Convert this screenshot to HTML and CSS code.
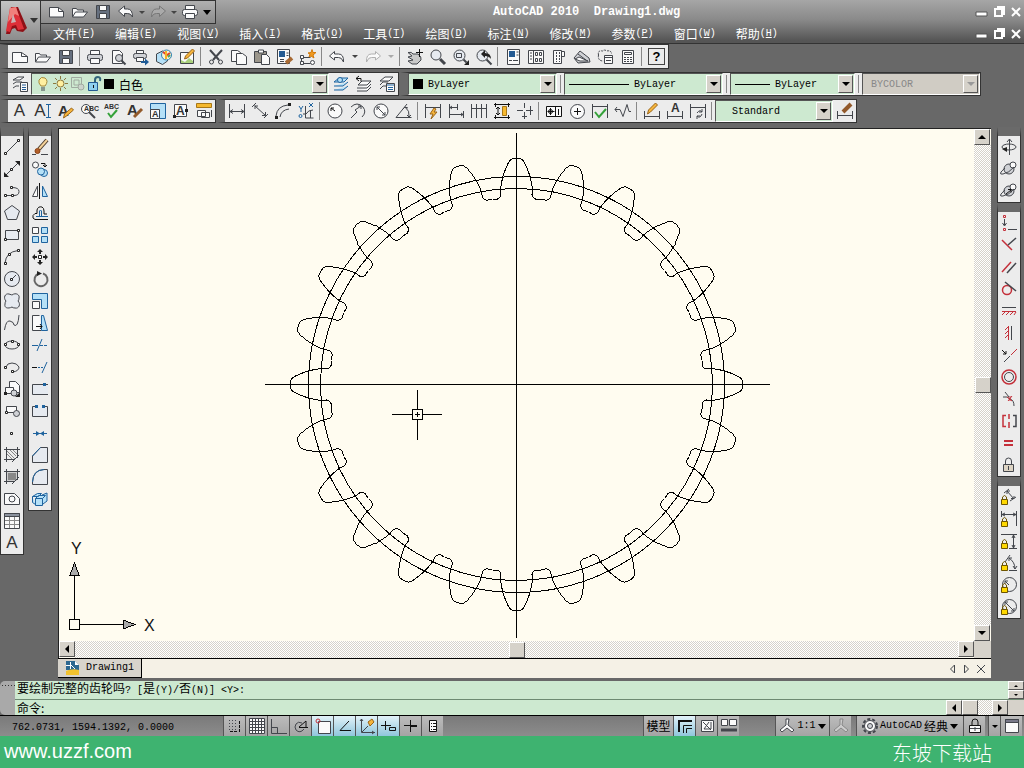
FILE: index.html
```html
<!DOCTYPE html>
<html lang="zh-CN">
<head>
<meta charset="utf-8">
<title>AutoCAD 2010 Drawing1.dwg</title>
<link rel="stylesheet" href="styles.css">
</head>
<body>
<header class="titlebar">
  <button class="app-button" title="应用程序菜单">
    <svg class="logo"><path fill="#8f1016" d="M2 29L7 2l7 0 9 21-4 4-6-1-2-3-3 1-2 5z"/><path fill="#dd2f38" d="M2 26L6 3l6-1 8 22-6 1-2-5-4 1-2 6z"/><path fill="#f0807c" d="M6 3l6-1 3 9-4-2-7 8z"/><path fill="#c9b4b4" d="M9 9l3 8-5 1z"/></svg>
    <i class="caret"></i>
  </button>
  <div class="title-main">
    <div class="title-row">
      <div class="quick">
        <button title="新建"><svg><path class="w" d="M.5 3.500h9l5 4v5.500h-14z"/><path d="M9.500 3.500v4h5"/></svg></button>
        <button title="打开"><svg><path class="w" d="M.5 13V4.500h4l1 1.500h6v2"/><path class="w" d="M.5 13l3-5h12l-4 5z"/></svg></button>
        <button title="保存"><svg><path fill="#66707f" d="M1.500 1.500h13v13h-13z"/><path class="w" d="M4.500 1.500h7v5h-7zM4.500 9.500h7v5h-7z"/></svg></button>
        <button title="放弃"><svg><path class="w" d="M.5 7l6-5v3h3q5 0 5 8-2-4-5-3.500h-3v3z"/></svg></button>
        <button class="drop" title="放弃列表"><i class="caret small"></i></button>
        <button title="重做"><svg><path fill="#aaa" stroke="#777" d="M15.500 7l-6-5v3h-3q-5 0-5 8 2-4 5-3.500h3v3z"/></svg></button>
        <button class="drop" title="重做列表"><i class="caret small"></i></button>
        <button title="打印"><svg><path class="w" d="M3.500 5.500v-4h9v4"/><rect class="w" x=".5" y="5.500" width="15" height="6" rx="2"/><path class="w" d="M3.500 9.500h9v5h-9z"/></svg></button>
        <button class="drop" title="自定义"><i class="caret black"></i></button>
      </div>
      <h1>AutoCAD 2010  Drawing1.dwg</h1>
      <div class="window-controls">
        <button title="最小化"><svg><path class="ctl" d="M1 8h11v4H1z"/></svg></button>
        <button title="还原"><svg><path class="ctl-line" d="M5 3h7v8M3 5h7v7H3z"/></svg></button>
        <button title="关闭"><svg><path class="ctl-line" d="M3 4l8 8M11 4l-8 8"/></svg></button>
      </div>
    </div>
    <div class="menu-row">
      <nav class="menus">
        <button>文件<span class="m">(<u>F</u>)</span></button>
        <button>编辑<span class="m">(<u>E</u>)</span></button>
        <button>视图<span class="m">(<u>V</u>)</span></button>
        <button>插入<span class="m">(<u>I</u>)</span></button>
        <button>格式<span class="m">(<u>O</u>)</span></button>
        <button>工具<span class="m">(<u>T</u>)</span></button>
        <button>绘图<span class="m">(<u>D</u>)</span></button>
        <button>标注<span class="m">(<u>N</u>)</span></button>
        <button>修改<span class="m">(<u>M</u>)</span></button>
        <button>参数<span class="m">(<u>P</u>)</span></button>
        <button>窗口<span class="m">(<u>W</u>)</span></button>
        <button>帮助<span class="m">(<u>H</u>)</span></button>
      </nav>
      <div class="window-controls">
        <button title="最小化图形"><svg><path class="ctl" d="M1 8h11v4H1z"/></svg></button>
        <button title="还原图形"><svg><path class="ctl-line" d="M5 3h7v8M3 5h7v7H3z"/></svg></button>
        <button title="关闭图形"><svg><path class="ctl-line" d="M3 4l8 8M11 4l-8 8"/></svg></button>
      </div>
    </div>
  </div>
</header>

<section class="toolbars">
  <div class="tool-row">
    <div class="toolbar">
      <button title="新建"><svg><path class="w" d="M.5 3.500h9l6 4v6h-15z"/><path d="M9.500 3.500v4h6"/></svg></button>
      <button title="打开"><svg><path class="w" d="M.5 13V4.500h4l1 1.500h6v2"/><path class="w" d="M.5 13l3-5h12l-4 5z"/></svg></button>
      <button title="保存"><svg><path fill="#66707f" d="M1.500 1.500h13v13h-13z"/><path class="w" d="M4.500 1.500h7v5h-7zM4.500 9.500h7v5h-7z"/></svg></button>
      <hr>
      <button title="打印"><svg><path class="w" d="M3.500 5.500v-4h9v4"/><rect class="g" x=".5" y="5.500" width="15" height="6" rx="2"/><path class="w" d="M3.500 9.500h9v5h-9z"/></svg></button>
      <button title="打印预览"><svg><path class="w" d="M2.500 14.500v-13h7l3 3v10z"/><circle class="g" cx="9" cy="9" r="3.500"/><path stroke-width="2" d="M11.500 11.500l4 4"/></svg></button>
      <button title="发布"><svg><path class="w" d="M3.500 5.500v-4h7v4"/><rect class="g" x=".5" y="4.500" width="13" height="5" rx="2"/><path class="w" d="M3.500 8.500h7v4h-7z"/><path stroke="#1d5a96" stroke-width="2" d="M8 13h5"/><path fill="#1d5a96" stroke="none" d="M12 9.500l4 3.500-4 3.500z"/></svg></button>
      <button title="三维DWF"><svg><path class="lb" d="M.5 5l6-3 5 3v7l-5 3.500-6-3z"/><circle fill="#f4f1d8" stroke="#2d82b0" cx="10.500" cy="6" r="5"/><path stroke="#e2402c" stroke-width="2" d="M7 3l4 3 3-2"/><path stroke="#f4b222" stroke-width="2" d="M10 2v8"/><path stroke="#4aa55a" stroke-width="2" d="M12 8l2-2"/></svg></button>
      <button title="标记"><svg><path class="w" d="M1.500 3.500h13v11h-13z"/><path fill="#a9cf7c" stroke="none" d="M2 14v-3l4 2 4-4 4 3v2z"/><path class="o" d="M5.500 10l1-3 7-7 2 2-7 7z"/></svg></button>
      <hr>
      <button title="剪切"><svg><path stroke-width="2" d="M2 1l9 10M14 1L5 11"/><circle cx="3.500" cy="13" r="2"/><circle cx="12.500" cy="13" r="2"/></svg></button>
      <button title="复制"><svg><path class="w" d="M.5 1.500h6l3 2v9h-9z"/><path class="w" d="M5.500 4.500h6l4 3v8h-10z"/></svg></button>
      <button title="粘贴"><svg><path fill="#9b968b" d="M.5 2.500h12v11H.5z"/><path class="w" d="M4.500 1h5v3h-5zM7.500 5.500h5l3 3v7h-8z"/></svg></button>
      <button title="特性匹配"><svg><path class="w" d="M.5.500h12v14H.5z"/><path fill="#245b93" stroke="none" d="M2 2h6v6H2z"/><path d="M9.500 4h2M9.500 6.500h2M3 10.500h4M3 12.500h4"/><path stroke="#a86a34" stroke-width="4" d="M15 9l-6 5"/></svg></button>
      <button title="块编辑器"><svg><path d="M1.500 14.500v-6h9M3.500 14.500h7"/><path class="w" d="M.5 12.500h3v3h-3zM.5 6.500h3v3h-3z"/><circle class="w" cx="12.500" cy="13.500" r="2"/><path fill="#f09a20" stroke="#d27a0c" d="M12 .5l1 3 3 0-3 2.500 1 3-3-2-2 1 1-3-2-1 3-.5z"/></svg></button>
      <hr>
      <button title="放弃"><svg><path class="w" d="M.5 7l5-4.500V5h4q5.500 0 5 8-2-5-5-4.500h-4V11z"/></svg></button>
      <button class="drop" title="放弃列表"><i class="caret small"></i></button>
      <button title="重做"><svg><path class="w dim" d="M15.500 7l-5-4.500V5h-4q-5.500 0-5 8 2-5 5-4.500h4V11z"/></svg></button>
      <button class="drop" title="重做列表"><i class="caret small pale"></i></button>
      <hr>
      <button title="实时平移"><svg><path fill="#c9c9c9" d="M1 3.500q4-1 5 1.500l5 0q4 3 3 6l-4 4H5L1 12l5-1-5-3 4-1z"/><path class="k" d="M12.500 0v8M9 3.500h7"/></svg></button>
      <button title="实时缩放"><svg><circle class="lg" cx="6" cy="6" r="5"/><path stroke-width="3" d="M10 10l5 5"/></svg></button>
      <button title="窗口缩放"><svg><circle class="lg" cx="6.500" cy="6.500" r="5.500"/><path d="M3.500 4.500h5v4h-5z"/><path stroke-width="2" d="M10.500 10.500l3 3"/><path class="f" d="M16 11v5h-5z"/></svg></button>
      <button title="缩放上一个"><svg><circle class="lg" cx="6.500" cy="6.500" r="5.500"/><path stroke-width="2" d="M10.500 10.500l5 5"/><path class="f" d="M5 5l4-4v3q6 0 6 6-2-3-6-3v2z"/></svg></button>
      <hr>
      <button title="特性"><svg><path class="w" d="M2.500.500h12v15h-12z"/><path fill="#245b93" stroke="none" d="M4 2h6v6H4z"/><path d="M11.500 3h2M11.500 6h2M4 11.500h3M8 11.500h5"/></svg></button>
      <button title="设计中心"><svg><path class="w" d="M.5 1.500h15v13H.5zM5.500 1.500v13"/><path d="M2 4h2M2 7h2M2 10h2M7.500 3.500h2v3h-2zM11.500 3.500h2v3h-2zM7.500 9.500h2v3h-2zM11.500 9.500h2v3h-2z"/></svg></button>
      <button title="工具选项板"><svg><path class="w" d="M2.500 1.500h8v13h-8zM10.500 2.500h3v5h-3"/><path stroke-dasharray="2 1" d="M5.500 3v10M8.500 3v10"/></svg></button>
      <button title="图纸集"><svg><path class="g" d="M0 9l6-7 9 7 1 4-12 1z"/><path class="w" d="M1 10l4-2 9 4-8 0zM4 5l8 6"/></svg></button>
      <button title="标记集"><svg><path stroke-dasharray="2 1" d="M1.500 6q-1-5 4-4 2-2 4 0 5-1 5 3M1.500 6q-1 6 5 6"/><path class="w" d="M7.500 6.500h8v8h-8z"/><path d="M7.500 8.500h8M9 11.500h5"/></svg></button>
      <button title="计算器"><svg><path class="w" d="M2.500 1.500h11v13h-11zM4.500 3.500h7v2h-7z"/><path stroke-dasharray="2 1" d="M4 8.500h8M4 10.500h8M4 12.500h8"/></svg></button>
      <hr>
      <button title="帮助" class="boxed">?</button>
    </div>
  </div>

  <div class="tool-row">
    <div class="toolbar">
      <button title="图层特性"><svg><path class="w" d="M1 4l5-3h6l-4 3zM1 8l3-2h6M1 12l3-2h3"/><path class="w" d="M8.500 6.500h7v9h-7z"/><path stroke="#245b93" d="M10 9h4M10 11.500h4M10 13.500h4"/></svg></button>
      <div class="combo layer">
        <svg><path fill="#fff0a0" stroke="#a58a3a" d="M5 10q-3-3-2-6 2-4 6-2 4 3 0 8z"/><path d="M5 12h4M5 14h4"/></svg>
        <svg><circle fill="#fff0a0" stroke="#8c7a40" cx="7.500" cy="7.500" r="3.500"/><path stroke="#8c7a40" d="M7.500 0v3M7.500 12v3M0 7.500h3M12 7.500h3M2 2l2 2M11 11l2 2M13 2l-2 2M4 11l-2 2"/></svg>
        <svg><path stroke="#a0aaa0" d="M1.500 1.500h10v10h-10zM4 4h5v5H4z"/><circle fill="#ccd4cc" stroke="#a0aaa0" cx="11" cy="11" r="3"/></svg>
        <svg><path stroke="#33667c" stroke-width="2" d="M8 7V4q0-3 3-3t2 4"/><path fill="#8ed0ee" stroke="#245b93" d="M1.500 6.500h9v8h-9z"/><path class="k" d="M6.500 9v3"/></svg>
        <b class="swatch"></b>
        <select class="cn" aria-label="图层"><option>白色</option></select><i class="arrow"></i>
      </div>
      <button title="置为当前"><svg><path class="lb b" d="M1 6l5-4h9l-4 4zM1 10h9l5-4M1 14h9l5-4"/><circle class="lb b" cx="7" cy="4" r="2.500"/></svg></button>
      <button title="上一个图层"><svg><path class="w" d="M2 9l4-4h9l-4 4zM1 12h10l4-4M1 15h10l4-4"/><path class="k" d="M0 2.500h5v3M3 0L0 2.500 3 5"/></svg></button>
      <button title="图层状态"><svg><path class="w" d="M1 5l5-4h8l-4 4zM1 9l3-3h5M1 13l3-3h3"/><path class="w" d="M7.500 7.500h8v8h-8z"/><path class="b" d="M8 9h7M9 11.500h5M9 13.500h5"/></svg></button>
    </div>
    <div class="toolbar props">
      <div class="combo color"><b class="swatch"></b><select aria-label="颜色"><option>ByLayer</option></select><i class="arrow"></i></div>
      <hr>
      <div class="combo ltype"><b class="stroke"></b><select aria-label="线型"><option>ByLayer</option></select><i class="arrow"></i></div>
      <hr>
      <div class="combo lweight"><b class="stroke"></b><select aria-label="线宽"><option>ByLayer</option></select><i class="arrow"></i></div>
      <hr>
      <div class="combo plot off"><select aria-label="打印样式" disabled><option>BYCOLOR</option></select><i class="arrow"></i></div>
    </div>
  </div>

  <div class="tool-row">
    <div class="toolbar">
      <button title="多行文字" class="glyph">A</button>
      <button title="单行文字" class="glyph">A<svg class="narrow"><path class="b" d="M0 1.500h5M0 14.500h5M2.500 1v14"/></svg></button>
      <button title="编辑文字"><svg><text class="t14" x="0" y="13">A</text><path class="o" d="M5.500 15l1-4 7-6 2 2-7 6z"/></svg></button>
      <button title="查找"><svg><circle class="w" cx="5" cy="6" r="4.500"/><path stroke-width="2" d="M8 9l6 6"/><text class="t7" x="3" y="8">ABC</text></svg></button>
      <button title="拼写检查"><svg><text class="t7" x="0" y="6">ABC</text><path stroke="#35a23a" stroke-width="2" d="M4 10l3 4 6-7"/></svg></button>
      <button title="文字样式"><svg><text class="t14" x="0" y="12">A</text><path stroke="#935a2c" stroke-width="3" d="M15 6l-8 8"/></svg></button>
      <button title="缩放文字"><svg><path class="lb b" d="M.5.500h15v15H.5z"/><path class="w" d="M.5 6.500h9v9h-9z"/><text class="t9" x="2" y="14">A</text></svg></button>
      <button title="对正文字"><svg><path class="w" d="M1.500 1.500h12v12h-12z"/><text class="t12" x="3" y="12">A</text><path class="f" d="M0 12h3v3H0zM12 6h3v3h-3z"/></svg></button>
      <button title="空间转换"><svg><path fill="#f5b82e" stroke="#a77718" d="M.5.500h15v4H.5z"/><path class="w" d="M1.500 7.500h8v6h-8zM5.500 9.500h8v5h-8z"/><path d="M15.500 7v7"/></svg></button>
    </div>
    <div class="toolbar">
      <button title="线性"><svg><path d="M.5 1v14M15.500 1v14M1 8.500h14M4 6.500L1 8.500l3 2M12 6.500l3 2-3 2"/></svg></button>
      <button title="对齐"><svg><path d="M4 0L0 4M16 11l-4 4M2.500 2.500l11 10M3 6V3h3M10 12.500h3.500V9"/></svg></button>
      <button title="弧长"><svg><path d="M1 13Q2 3 13 2M5 14q1-7 9-8"/><path class="f" d="M0 13h3v3H0zM13 0h3v3h-3z"/></svg></button>
      <button title="坐标"><svg><path class="b" d="M1 3l2 3 2-3M3 6v3M11 0l4 4M15 0l-4 4"/><path d="M7.500 3v12h8M5 11h3M12.500 7v8M8 11q2-4 7-4"/><circle class="b" cx="2.500" cy="13" r="1.500"/></svg></button>
      <hr>
      <button title="半径"><svg><circle class="w" cx="8" cy="8" r="7"/><path class="k" d="M8 8L4 5M4 8V5h3"/></svg></button>
      <button title="折弯"><svg><path d="M1 4q6-6 12 0 4 5-1 10M1 15l6-6-2-2 6-4M8 3h3v3"/></svg></button>
      <button title="直径"><svg><circle class="w" cx="8" cy="8" r="7"/><path d="M4 4l8 8M4 7V4h3M12 9v3H9"/></svg></button>
      <button title="角度"><svg><path d="M15.500 14.500H0L11 1M9 4q5 4 4 9M7 6l2-2 3 1M11 12l2 2 2-2"/></svg></button>
      <hr>
      <button title="快速标注"><svg><path d="M.5 1v14M15.500 1v14M1 4.500h14"/><path class="o" d="M9 5l-4 6h3l-2 5 6-7H9l2-3z"/></svg></button>
      <button title="基线"><svg><path d="M1.500 1v14M9.500 1v6M15.500 8v7M2 4.500h7M2 11.500h13M4 3L2 4.500 4 6M13 10l2 1.500-2 1.500"/></svg></button>
      <button title="连续"><svg><path d="M.5 1v14M5.500 1v14M10.500 1v14M15.500 1v14M0 5.500h16"/></svg></button>
      <button title="标注间距"><svg><path class="k" d="M0 1.500h16M0 14.500h16M1.500 0v4M14.500 0v4M1.500 12v4M14.500 12v4M4 4v8M2 6l2-2 2 2M2 10l2 2 2-2"/><path fill="#f5b82e" stroke="#a77718" d="M8.500 3.500h4v9h-4z"/></svg></button>
      <button title="标注打断"><svg><path d="M7.500 0v5M7.500 9v7M0 7.500h6M9 7.500h7M5 13.500h5M13.500 3v9"/></svg></button>
      <hr>
      <button title="公差"><svg><path class="k w" d="M.5 3.500h15v10H.5z"/><path class="k" d="M9.500 3.500v10M4.500 5v7M1.500 8.500h7M12.500 6v6"/><circle class="k" cx="4.500" cy="8.500" r="2"/></svg></button>
      <button title="圆心标记"><svg><circle class="w" cx="8.500" cy="8.500" r="7"/><path class="k" d="M8.500 5v7M5 8.500h7"/></svg></button>
      <button title="检验"><svg><path d="M.5 1v14M15.500 1v14M1 3.500h14"/><path stroke="#35a23a" stroke-width="2" d="M3 9l4 5 7-8"/></svg></button>
      <button title="折弯线性"><svg><path d="M0 6.500h5l3 7 4-12 2 7h2M2 4L0 6.500 2 9"/></svg></button>
      <hr>
      <button title="编辑标注"><svg><path d="M.5 8v8M15.500 8v8M1 13.500h14"/><path class="o" d="M3.500 11l1-4 7-7 2 2-7 7z"/></svg></button>
      <button title="编辑标注文字"><svg><path d="M.5 8v8M15.500 8v8M1 13.500h14"/><text class="t12" x="4" y="9">A</text></svg></button>
      <button title="标注更新"><svg><path d="M.5 1v14M15.500 1v14M1 4.500h14M7 10q3-4 5-1M12 11q-2 5-5 2M12 6v3H9M7 16v-3h3"/></svg></button>
      <hr>
      <div class="combo style"><select aria-label="标注样式"><option>Standard</option></select><i class="arrow"></i></div>
      <button title="标注样式管理"><svg><path d="M.5 8v8M15.500 8v8M1 12.500h14"/><path stroke="#935a2c" stroke-width="4" d="M14 1L6 9"/></svg></button>
    </div>
  </div>
</section>

<main class="workspace">
  <div class="toolbar vertical">
    <button title="直线"><svg><path d="M2 14L14 2"/><path class="p" d="M.5 13.500h2v2h-2zM13.500.500h2v2h-2z"/></svg></button>
    <button title="构造线"><svg><path d="M2 14L14 2"/><path class="f" d="M0 16v-5l5 5zM16 0v5l-5-5z"/><path class="p" d="M6.500 7.500h2v2h-2z"/></svg></button>
    <button title="多段线"><svg><path d="M1 12.500h9q5 0 5-4t-7-4"/><path class="p" d="M.5 11.500h2v2h-2zM7.500 11.500h2v2h-2zM6.500 3.500h2v2h-2z"/></svg></button>
    <button title="正多边形"><svg><path class="lg" d="M8 .5L15.500 6l-3 8.500h-9L.5 6z"/></svg></button>
    <button title="矩形"><svg><path class="lg" d="M1.500 3.500h13v9h-13z"/><path class="p" d="M.5 11.500h2v2h-2zM13.500 2.500h2v2h-2z"/></svg></button>
    <button title="圆弧"><svg><path d="M1 14Q2 3 14 1.500"/><path class="p" d="M.5 13.500h2v2h-2zM4.500 4.500h2v2h-2zM13.500.500h2v2h-2z"/></svg></button>
    <button title="圆"><svg><circle class="lg" cx="8" cy="8" r="7.500"/><path d="M8 8l4-4"/><path class="p" d="M6.500 7.500h2v2h-2z"/></svg></button>
    <button title="修订云线"><svg><path class="lg" d="M2 8C-1 5 1 0 5 1q3 1 3 1C12-1 16 2 15 5q0 2-1 3c3 3 1 8-3 7q-2 0-3-1c-4 2-8 1-7-3q0-2 1-3z"/></svg></button>
    <button title="样条曲线"><svg><path d="M.5 15Q2 5 6 6t4 4Q14 13 15 0"/></svg></button>
    <button title="椭圆"><svg><ellipse cx="8" cy="8" rx="7" ry="4"/><path class="p" d="M.5 6.500h2v2h-2zM13.500 6.500h2v2h-2zM7.500 3.500h2v2h-2z"/></svg></button>
    <button title="椭圆弧"><svg><path d="M2 8q1-4 6-4t7 4q0 4-6 5"/><path class="p" d="M.5 7.500h2v2h-2zM7.500 11.500h2v2h-2z"/></svg></button>
    <button title="插入块"><svg><path class="w" d="M5.500 8V.5h6l4 4v7h-4"/><path class="w" d="M1.500 6.500h8v6h-8z"/><circle class="g" cx="10" cy="12" r="3"/><path class="f" d="M16 11v5h-5zM0 11h3v3H0z"/></svg></button>
    <button title="创建块"><svg><path class="w" d="M2.500 3.500h10v6h-10z"/><circle class="g" cx="12.500" cy="10.500" r="3"/><path class="p" d="M1.500 8.500h2v2h-2z"/></svg></button>
    <button title="点"><svg><path class="p" d="M6.500 7.500h2v2h-2z"/></svg></button>
    <button title="图案填充"><svg><path d="M2.500 0v15M13.500 0v11M0 2.500h16M0 12.500h11M8 15l7-7"/><path stroke="#888" d="M3 4l8 8M3 7l5 5M6 3l6 6M9 3l4 4"/></svg></button>
    <button title="渐变色"><svg><path fill="#888" stroke="#ccc" d="M3.500 3.500h9v8h-9z"/><path d="M2.500 0v15M13.500 0v11M0 2.500h16M0 12.500h11M8 15l7-7"/></svg></button>
    <button title="面域"><svg><path class="w" d="M.5 2.500h10l5 5v6H.5z"/><circle class="w" cx="8" cy="8" r="3"/></svg></button>
    <button title="表格"><svg><path class="w" d="M.5.500h15v15H.5z"/><path fill="#8b929e" d="M.5.500h15v3H.5z"/><path d="M5.500 4v11M10.500 4v11M1 7.500h14M1 11.500h14" stroke="#888"/></svg></button>
    <button title="多行文字" class="glyph">A</button>
  </div>
  <div class="toolbar vertical">
    <button title="删除"><svg><path d="M0 15.500h4M9 15.500h7"/><path stroke="#4a3a2c" stroke-width="4" d="M15 1L7 10"/><path stroke="#f4d29a" stroke-width="2" d="M15 1L7 10"/><circle fill="#b4602a" stroke="#8a4318" cx="5.500" cy="12" r="2.500"/></svg></button>
    <button title="复制"><svg><circle class="w" cx="3.500" cy="4" r="3"/><path class="k" d="M9 2.500h4v3M11 4l2 2 2-2"/><circle class="lb b" cx="12" cy="12" r="3.500"/><circle class="lb b" cx="9" cy="10.500" r="3.500"/></svg></button>
    <button title="镜像"><svg><path class="w" d="M5.500 3v10.500h-5z"/><path class="lb b" d="M10.500 3v10.500h5z"/><path class="k" d="M7.500 0v16"/></svg></button>
    <button title="偏移"><svg><path class="k" d="M16 14.500H3q-3-1-2-4 2-3 4-2V5q1-4 5-3 2 1 2 4v3h3"/><path class="b" d="M16 11.500H4M7.500 11V6q1-2 2 0v5"/></svg></button>
    <button title="阵列"><svg><path class="w" d="M.5.500h6v6h-6z"/><path class="lb b" d="M9.500.500h6v6h-6zM.5 9.500h6v6h-6zM9.500 9.500h6v6h-6z"/></svg></button>
    <button title="移动"><svg><path class="f" d="M8 0l3 3H9v2H7V3H5zM8 16l3-3H9v-2H7v2H5zM0 8l3-3v2h2v2H3v2zM16 8l-3-3v2h-2v2h2v2z"/><path class="p" d="M6.500 6.500h3v3h-3z"/></svg></button>
    <button title="旋转"><svg><path stroke="#666" stroke-width="2" d="M7 2.500a6.500 6.500 0 1 0 4 0"/><path class="f" d="M5 0l5 2.500L5 5z"/></svg></button>
    <button title="缩放"><svg><path class="lb b" d="M.5.500h15v15h-6V6.500H.5z"/><path class="w" d="M.5 8.500h7v7h-7z"/></svg></button>
    <button title="拉伸"><svg><path class="w" d="M7.500.500h-7v15h9"/><path class="lb b" d="M9.500.500h2l4 15h-6z"/><path class="k" d="M4 11.500h6M8 9l2 2.500L8 14"/></svg></button>
    <button title="修剪"><svg><path class="b" d="M10 2L5 14M0 8.500h6"/><path class="b" stroke-dasharray="3 1" d="M8 8.500h8"/></svg></button>
    <button title="延伸"><svg><path class="k" d="M0 8.500h5"/><path class="b" stroke-dasharray="2 1" d="M6 8.500h5"/><path class="b" d="M15 3l-5 11"/></svg></button>
    <button title="打断于点"><svg><path class="lg" d="M16 3.500H.5v10H16"/><path class="bf" d="M11 2h3v3h-3z"/></svg></button>
    <button title="打断"><svg><path class="lg" d="M3 3.500H.5v10h15v-10H13"/><path class="bf" d="M3 2h3v3H3zM10 2h3v3h-3z"/></svg></button>
    <button title="合并"><svg><path class="b" d="M1 8.500h14"/><path class="bf" d="M4 6l4 2.500L4 11zM12 6L8 8.500l4 2.500z"/></svg></button>
    <button title="倒角"><svg><path class="lg" d="M.5 9l8-8.500h7v15H.5z"/><path class="b" d="M.5 9l8-8.500"/></svg></button>
    <button title="圆角"><svg><path class="lg" d="M.5 13Q1 1 12 .5h3.500v15H.5z"/><path class="b" d="M.5 13Q1 1 12 .5"/></svg></button>
    <button title="分解"><svg><path class="lb b" d="M.5 5.500l5-3h4l-3 3zM10 4l5-2v8l-4 3M.5 5.500v6l3 2M3.500 7.500h7v7h-7zM3.500 7.500l3-3h7l-3 3"/></svg></button>
  </div>

  <section class="document">
    <div class="view">
      <svg class="drawing" viewBox="59 129 915 512">
        <defs>
          <path id="tooth" d="M-24-185.500L-19-185.500Q-16-187-15.500-190L-16-195C-15-206-12-214-8-222Q-6-226-2-226L2-226Q6-226 8-222C12-214 15-206 16-195L15.500-190Q16-187 19-185.500L24-185.500"/>
          <g id="quarter">
            <use href="#tooth"/><use href="#tooth" transform="rotate(15)"/><use href="#tooth" transform="rotate(30)"/>
            <use href="#tooth" transform="rotate(45)"/><use href="#tooth" transform="rotate(60)"/><use href="#tooth" transform="rotate(75)"/>
          </g>
        </defs>
        <g transform="translate(516.500 384.500)">
          <circle r="208"/><circle r="196"/>
          <path d="M-252 0h505M0-252v505"/>
          <use href="#quarter"/><use href="#quarter" transform="rotate(90)"/><use href="#quarter" transform="rotate(180)"/><use href="#quarter" transform="rotate(270)"/>
        </g>
        <path d="M392 414.500h20M423 414.500h19M417.500 390v19M417.500 420v20M412.500 409.500h10v10h-10zM415 414.500h5M417.500 412v5"/>
        <path d="M69.500 619.500h10v10h-10zM74.500 619v-44M80 624.500h43"/>
        <path fill="#aaa" d="M74.500 563l4.500 12h-9zM135 624.500l-12-4.500v9z"/>
        <text x="71" y="554">Y</text><text x="144" y="631">X</text>
      </svg>
      <div class="scroll vert">
        <button title="向上"><i class="tri up"></i></button><div class="track"><button class="thumb" title="垂直滚动"></button></div><button title="向下"><i class="tri down"></i></button>
      </div>
      <div class="scroll horz">
        <button title="向左"><i class="tri left"></i></button><div class="track"><button class="thumb" title="水平滚动"></button></div><button title="向右"><i class="tri right"></i></button>
      </div>
      <div class="corner"></div>
    </div>
    <div class="tabs">
      <button class="tab"><svg><path fill="#2d6890" stroke="none" d="M1 1h9l4 4v5H1z"/><path stroke="#fff" d="M1 5.500h5M5.500 2v7M6 5l4 4"/><path fill="#f2c22e" stroke="none" d="M1 11q6-3 13-1v5H1z"/><path fill="#fff" stroke="none" d="M10 1l4 4h-4z"/></svg>Drawing1</button>
      <div class="tab-nav">
        <button title="上一个"><svg><path d="M8.500 4v8l-4-4z"/></svg></button>
        <button title="下一个"><svg><path d="M4.500 4v8l4-4z"/></svg></button>
        <button title="关闭"><svg><path d="M3 4l8 8M11 4l-8 8"/></svg></button>
      </div>
    </div>
  </section>

  <aside class="right-tools">
    <div class="toolbar vertical">
      <button title="受约束的动态观察"><svg><path d="M8.500 0v16M6 3l2.500-3L11 3"/><ellipse cx="8" cy="8" rx="7" ry="3"/><path class="f" d="M1 10l5-2v5z"/></svg></button>
      <button title="自由动态观察"><svg><circle class="g" cx="8" cy="8" r="5"/><circle class="w" cx="12" cy="4" r="3"/><path d="M13 6Q8 12 2 13T4 7"/></svg></button>
      <button title="连续动态观察"><svg><circle class="g" cx="8" cy="8" r="5"/><circle class="w" cx="12" cy="4" r="3"/><path d="M13 6Q8 12 2 13T4 7"/><path class="k" d="M5 11l5-4M7 6.500h3v3"/></svg></button>
    </div>
    <div class="toolbar vertical">
      <button title="重合"><svg><path class="r" d="M2.500.500h2v2h-2zM2.500 13.500h2v2h-2z"/><path d="M3.500 4v6M1.500 8l2 3 2-3M7 14.500h9"/></svg></button>
      <button title="垂直"><svg><path class="r thick" d="M1 3l10 10"/><path class="thick" d="M7 8l8-7"/></svg></button>
      <button title="平行"><svg><path class="r thick" d="M1 13L10 3"/><path class="thick" d="M6 14L15 4"/></svg></button>
      <button title="相切"><svg><circle class="r thick" cx="6" cy="9" r="4.500"/><path class="thick" d="M4 1l11 9"/></svg></button>
      <button title="水平"><svg><path d="M1 4.500h14"/><path class="r" d="M1 8.500h14M1 12l3-3M5 12l3-3M9 12l3-3M13 12l2-3"/></svg></button>
      <button title="竖直"><svg><path d="M10.500 1v14"/><path class="r" d="M7.500 1v14M7 2L4 5M7 6L4 9M7 10l-3 3"/></svg></button>
      <button title="共线"><svg><path d="M3 15l6-6"/><path class="k" d="M1 3l4 4M5 4v3H2"/><path class="r" d="M10 8l6-6"/></svg></button>
      <button title="同心"><svg><circle class="r thick" cx="8" cy="8" r="7"/><circle cx="8" cy="8" r="4.500"/></svg></button>
      <button title="平滑"><svg><path d="M2 6q5-1 7 2 4 1 4 7M4 1l4 5"/><path class="r" d="M6 6l5 4M11 5l-4 5M9 5v5"/></svg></button>
      <button title="对称"><svg><path class="r thick" d="M5 2.500H2v11h3M8 1v5M8 9v6"/><path class="thick" d="M12 2.500h3v11h-3"/></svg></button>
      <button title="相等"><svg><path class="r" stroke-width="2" d="M3 6h9M3 10h9"/></svg></button>
      <button title="固定"><svg><path d="M4.500 7V4q0-3 3-3t3 3v3"/><path fill="#ddd4c4" d="M2.500 7.500h10v7h-10z"/><path d="M7.500 9v4"/></svg></button>
    </div>
    <div class="toolbar vertical">
      <button title="对齐标注约束"><svg><path d="M3 4l5-4M9 12l6-4M6 2l7 8M6 5V2h3M10 9.500h3V7"/><path class="y" d="M.5 10.500h6v5h-6z"/><path stroke="#6e5500" d="M1.500 10V8q2-3 4 0v2"/></svg></button>
      <button title="水平标注约束"><svg><path d="M.5 0v6M15.500 0v15M1 3.500h14M4 2L1 3.500 4 5M12 2l3 1.500L12 5"/><path class="y" d="M.5 10.500h6v5h-6z"/><path stroke="#6e5500" d="M1.500 10V8q2-3 4 0v2"/></svg></button>
      <button title="竖直标注约束"><svg><path d="M0 1.500h16M8 15.500h8M12.500 2v13M11 5l1.500-3L14 5M11 12l1.500 3 1.500-3"/><path class="y" d="M.5 10.500h6v5h-6z"/><path stroke="#6e5500" d="M1.500 10V8q2-3 4 0v2"/></svg></button>
      <button title="角度约束"><svg><path d="M4 7l5-7M8 15.500h8M8 3q6 4 6 11M8 6V3h3M12 11l2 3 2-3"/><path class="y" d="M.5 10.500h6v5h-6z"/><path stroke="#6e5500" d="M1.500 10V8q2-3 4 0v2"/></svg></button>
      <button title="半径约束"><svg><circle cx="8.500" cy="7.500" r="7"/><path d="M4 4l4 4M4 7V4h3"/><path class="y" d="M.5 10.500h6v5h-6z"/><path stroke="#6e5500" d="M1.500 10V8q2-3 4 0v2"/></svg></button>
      <button title="直径约束"><svg><circle cx="8.500" cy="7.500" r="7"/><path d="M4 3l9 9M4 6V3h3M13 9v3h-3"/><path class="y" d="M.5 10.500h6v5h-6z"/><path stroke="#6e5500" d="M1.500 10V8q2-3 4 0v2"/></svg></button>
    </div>
  </aside>
</main>

<section class="command">
  <div class="command-grip"></div>
  <div class="command-body">
    <div class="history"><p>要绘制完整的齿轮吗<span class="m">? [</span>是<span class="m">(Y)/</span>否<span class="m">(N)] &lt;Y&gt;:</span></p>
      <div class="spin"><button title="上一行"><i class="tri up tiny"></i></button><button title="下一行"><i class="tri down tiny"></i></button></div>
    </div>
    <div class="prompt"><label for="cmd">命令:</label><input id="cmd" type="text">
      <div class="scroll mini"><button title="向左"><i class="tri left"></i></button><div class="track"><button class="thumb" title="滚动"></button></div><button title="向右"><i class="tri right"></i></button></div><div class="corner"></div>
    </div>
  </div>
</section>

<footer class="status">
  <output class="coords m">762.0731, 1594.1392, 0.0000</output>
  <div class="toggles">
    <button title="捕捉"><svg><path stroke-dasharray="1 2" d="M2 2.500h9M2 5.500h9M2 8.500h9M2 11.500h9"/><path class="k" stroke-dasharray="3 1" d="M3 13.500h8M12.500 3v11"/></svg></button>
    <button title="栅格"><svg><path class="w" d="M.5.500h15v15H.5z"/><path d="M3.500 0v16M6.500 0v16M9.500 0v16M12.500 0v16M0 3.500h16M0 6.500h16M0 9.500h16M0 12.500h16"/></svg></button>
    <button title="正交"><svg><path d="M.5 1v14.500H16M.5 9.500h6v6"/></svg></button>
    <button title="极轴"><svg><path d="M9 5Q5 3 3 6t0 6q4 4 8-1"/><path class="k" d="M6 9.500h9M6 9l7-6v6"/></svg></button>
    <button title="对象捕捉" class="on"><svg><path class="w" d="M3.500 3.500h12v12h-12z"/><circle class="r" cx="3" cy="3" r="2"/></svg></button>
    <button title="对象追踪" class="on"><svg><path class="k" d="M12 3L3 12.500h11"/></svg></button>
    <button title="动态UCS" class="on"><svg><path d="M2.500 1v13.500H16M1 3l1.500-2L4 3M13 13l2 1.500-2 1.500M3 14l6-6"/><path class="o" d="M9 4l4-3 2 3-4 4z"/></svg></button>
    <button title="动态输入" class="on"><svg><path class="k" d="M0 7.500h10M4.500 3v9M8.500 9.500h6v3h-6z"/></svg></button>
    <button title="线宽"><svg><path class="k" d="M1 7.500h6M7.500 2v12"/><path class="k" stroke-width="2" d="M8 8h6"/></svg></button>
    <button title="快捷特性"><svg><path class="k w" d="M4.500 2.500h7v11h-7z"/><path class="k" stroke-dasharray="1 1 3 1" d="M6 5.500h5M6 8.500h5M6 11.500h5"/></svg></button>
  </div>
  <div class="status-fill"></div>
  <div class="layouts">
    <button class="model">模型</button>
    <button title="模型空间" class="on"><svg><path class="k" stroke-width="2" d="M2 14V3h13"/><path class="k" d="M6.500 15V7.500H15M9.500 15v-4.500H15"/></svg></button>
    <button title="布局"><svg><path class="w" d="M2.500 2.500h12v11h-12z"/><path d="M4 4l8 8M10 4l-5 7h7V4"/></svg></button>
    <button title="快速查看"><svg><path class="w" d="M.5 1.500h6v6h-6zM8.500 1.500h7v6h-7z"/><path stroke-width="3" d="M0 12h16"/></svg></button>
  </div>
  <div class="scale">
    <button title="注释比例"><svg><path class="w" d="M7 1h3l-1 6 6 5-2 2-5-4-5 4-2-2 6-5z"/></svg><span class="m">1:1</span><i class="caret black"></i></button>
    <button title="注释可见性"><svg><path fill="#ccc" stroke="#888" d="M7 1h3l-1 6 6 5-2 2-5-4-5 4-2-2 6-5z"/></svg></button>
  </div>
  <div class="space">
    <button title="切换工作空间"><svg><circle cx="8" cy="8" r="7" stroke-width="2" stroke-dasharray="3 2"/><circle class="w" cx="8" cy="8" r="5.500"/><circle class="g" cx="8" cy="8" r="2.500"/></svg><span class="m">AutoCAD</span>经典<i class="caret black"></i></button>
    <button title="锁定"><svg><path class="k" d="M5 7V4q0-3 3-3t3 3v3"/><path class="w k" d="M2.500 7.500h11v7h-11z"/><path d="M3 10.500h10M8 9v4"/></svg></button>
  </div>
  <div class="end">
    <button class="drop" title="状态栏菜单"><i class="caret small ink"></i></button>
    <button title="全屏显示"><svg><path class="w" d="M1.500 1.500h13v13h-13z"/><path fill="#778" d="M1.500 1.500h13v3h-13z"/></svg></button>
  </div>
</footer>

<div class="site">
  <a href="#">www.uzzf.com</a>
  <span>东坡下载站</span>
</div>
</body>
</html>
```
FILE: styles.css
```css
* { box-sizing: border-box; }
body {
  margin: 0;
  min-height: 100vh;
  display: flex;
  flex-direction: column;
  background: #686868;
  color: #000;
  font-family: "Noto Sans CJK SC", sans-serif;
  font-size: 12px;
  line-height: 16px;
  overflow-x: hidden;
}
button {
  margin: 0;
  padding: 0;
  border: 0;
  background: none;
  color: inherit;
  font: inherit;
  display: flex;
  align-items: center;
  justify-content: center;
}
.m, select, h1, .tab { font-family: "Liberation Mono", monospace; font-size: 10px; }

/* icon drawing */
svg { width: 16px; height: 16px; flex: none; fill: none; stroke: #43464c; overflow: visible; }
svg.narrow { width: 5px; }
.w { fill: #fafafa; }
.g { fill: #d0d2d6; }
.lg { fill: #e6eaf0; }
.lb { fill: #b5e0f7; }
.b { stroke: #1f639e; }
.bf { fill: #1f639e; stroke: none; }
.k { stroke: #111; }
.f { fill: #222; stroke: none; }
.p { fill: #fff; stroke: #222; }
.r { stroke: #c4303a; }
.o { fill: #f6b53c; stroke: #9a6418; }
.y { fill: #ffd800; stroke: #6e5500; }
.dim { stroke: #b0b0b0; }
.thick { stroke-width: 1.5; }
svg text { fill: #333; stroke: none; font-family: "Liberation Sans", sans-serif; font-weight: bold; }
.t7 { font-size: 7px; }
.t9 { font-size: 9px; }
.t12 { font-size: 12px; }
.t14 { font-size: 15px; }

.caret { border: 4px solid transparent; border-top: 5px solid #333; border-bottom: 0; }
.caret.small { border-width: 3px; border-top-width: 3px; border-top-color: #444; border-bottom: 0; }
.caret.black { border-top-color: #000; }
.caret.small.ink { border-top-color: #000; }
.caret.small.pale { border-top-color: #aaa; }

/* title bar */
.titlebar {
  display: flex;
  height: 44px;
  background: linear-gradient(#a6a6a6, #8a8a8a 45%, #555 95%);
  border-bottom: 1px solid #333;
}
.app-button {
  width: 41px;
  height: 41px;
  gap: 2px;
  border: 1px solid #333;
  background: linear-gradient(#c4c4c4, #8c8c8c);
}
.logo { width: 24px; height: 32px; stroke: none; }
.title-main { flex: 1; min-width: 0; }
.title-row, .menu-row { display: flex; align-items: center; }
.title-row { height: 24px; }
.quick {
  display: flex;
  align-self: stretch;
  width: 175px;
  padding-left: 4px;
  border: 1px solid #333;
  border-left: 0;
  background: linear-gradient(#b0b0b0, #8c8c8c);
}
.quick button { width: 23px; }
.quick .drop { width: 9px; }
.quick .drop:last-child { width: 12px; }
h1 {
  flex: 1;
  margin: 0;
  color: #fff;
  font-size: 12px;
  text-align: center;
  white-space: pre;
  padding-right: 16px;
}
.window-controls { display: flex; margin-left: auto; width: 51px; }
.window-controls button { width: 17px; }
.window-controls svg { width: 14px; }
.ctl { fill: #fff; stroke: #555; }
.ctl-line { stroke: #fff; stroke-width: 2; }
.menus { display: flex; gap: 20px; padding-left: 12px; color: #fff; }
.menus button { white-space: nowrap; }
.menu-row { height: 19px; }

/* toolbars */
.toolbars { display: flex; flex-direction: column; gap: 3px; padding-bottom: 4px; }
.tool-row { display: flex; gap: 1px; }
.toolbar {
  display: flex;
  align-items: stretch;
  min-height: 24px;
  border: 1px solid #333;
  border-left: 8px solid #6a6a6a;
  background: #ececec;
}
.toolbar > button { width: 23px; }
.toolbar > .drop { width: 13px; }
.toolbar hr { width: 1px; margin: 2px 3px 2px 2px; border: 0; background: #888; }
.toolbar.props hr { margin: 2px 3px; }
.toolbar .boxed {
  width: 17px;
  margin: 3px;
  border: 1px solid #444;
  font: bold 13px "Liberation Sans", sans-serif;
}
.glyph { color: #333; font: 17px "Liberation Sans", sans-serif; }
.toolbar.vertical {
  flex-direction: column;
  align-self: flex-start;
  width: 24px;
  border: 1px solid #333;
  border-top: 9px solid #6a6a6a;
}
.toolbar.vertical > button { width: 22px; height: 22px; }

/* drop-down boxes */
.combo {
  display: flex;
  align-items: center;
  gap: 1px;
  border: 1px solid #555;
  border-right-color: #fff;
  border-bottom-color: #fff;
  background: #cde9d0;
  padding: 1px 1px 1px 4px;
}
.combo select {
  flex: 1;
  min-width: 0;
  height: 18px;
  margin: 0 -16px 0 0;
  padding: 0 16px 0 4px;
  border: 0;
  background: none;
  color: #000;
  appearance: none;
}
.combo select.cn { font-family: "Noto Sans CJK SC", sans-serif; font-size: 12px; }
.arrow {
  display: flex;
  align-items: center;
  justify-content: center;
  width: 15px;
  height: 18px;
  background: #d6d2ca;
  border: 1px solid;
  border-color: #fff #555 #555 #fff;
  pointer-events: none;
}
.arrow::after { content: ""; border: 4px solid transparent; border-top-color: #000; border-bottom: 0; }
.swatch { width: 10px; height: 10px; background: #000; }
.stroke { height: 1px; background: #000; }
.layer { width: 298px; }
.color { width: 149px; }
.ltype { width: 159px; }
.ltype .stroke { width: 60px; }
.lweight { width: 125px; }
.lweight .stroke { width: 35px; }
.plot { width: 118px; }
.style { width: 118px; }
.style select { padding-left: 12px; }
.combo.off { background: #d0ccc4; }
.combo.off select { color: #888; opacity: 1; }
.off .arrow::after { border-top-color: #999; }

/* work area */
.workspace { display: flex; flex: 1; gap: 4px; padding-right: 3px; min-height: 0; }
.right-tools { display: flex; flex-direction: column; margin-left: 2px; }
.document {
  flex: 1;
  min-width: 0;
  display: flex;
  flex-direction: column;
  margin: 1px 0 3px 2px;
}
.view {
  flex: 1;
  display: grid;
  grid-template: minmax(0, 1fr) 17px / minmax(0, 1fr) 17px;
  border-left: 1px solid #222;
  border-top: 1px solid #222;
  background: #fffcf0;
}
.drawing {
  width: 100%;
  height: 0;
  min-height: 100%;
  stroke: #000;
  shape-rendering: crispEdges;
  overflow: hidden;
}
.drawing text { fill: #111; font-size: 16px; font-weight: normal; }
.scroll { display: flex; }
.scroll.vert { flex-direction: column; }
.track {
  flex: 1;
  display: flex;
  align-items: center;
  justify-content: center;
  background: repeating-conic-gradient(#fff 0 25%, #d6d2ca 0 50%) 0 0 / 2px 2px;
}
.scroll button, .spin button {
  flex: none;
  width: 16px;
  height: 16px;
  background: #d6d2ca;
  border: 1px solid;
  border-color: #fff #555 #555 #fff;
}
.corner { background: #d6d2ca; }
.tri { border: 4px solid transparent; }
.tri.up { border-top: 0; border-bottom-color: #000; }
.tri.down { border-bottom: 0; border-top-color: #000; }
.tri.left { border-left: 0; border-right-color: #000; }
.tri.right { border-right: 0; border-left-color: #000; }
.tri.tiny { border-left-width: 2px; border-right-width: 2px; }
.tri.tiny.up { border-bottom-width: 2px; }
.tri.tiny.down { border-top-width: 2px; }
.tabs {
  display: flex;
  height: 20px;
  border-top: 1px solid #000;
  background: #f5f1e6;
}
.tab {
  width: 84px;
  gap: 5px;
  background: #d8d4cc;
  border-right: 1px solid #000;
  border-bottom: 1px solid #000;
}
.tab-nav { display: flex; margin-left: auto; padding-right: 3px; }
.tab-nav svg { width: 14px; }

/* command window */
.command { display: flex; height: 35px; border-bottom: 1px solid #000; }
.command-grip {
  width: 15px;
  background: radial-gradient(#333 1px, transparent 1px) 1px 3px / 3px 3px repeat-x, #a9a9a9;
  border-radius: 5px 0 0 5px;
}
.command-body { flex: 1; min-width: 0; background: #cde9d0; }
.history { display: flex; height: 19px; border-bottom: 1px solid #6d8a72; }
.history p { flex: 1; margin: 0; padding-left: 2px; white-space: pre; line-height: 14px; }
.spin button { height: 9px; }
.prompt { display: flex; height: 15px; align-items: center; }
.prompt label { padding-left: 2px; }
.prompt input {
  flex: 1;
  min-width: 0;
  height: 15px;
  border: 0;
  padding: 0 4px;
  background: none;
  font: 10px "Liberation Mono", monospace;
}
.scroll.mini { width: 62px; }
.scroll.mini button { height: 15px; }
.mini .track { justify-content: flex-start; }
.prompt .corner { width: 16px; height: 15px; }

/* status bar */
.status {
  display: flex;
  height: 20px;
  background: linear-gradient(#7a7a7a, #8c8c8c);
}
.coords { width: 223px; padding: 4px 0 0 12px; white-space: pre; }
.toggles, .layouts, .scale, .space, .end { display: flex; }
.status button {
  width: 22px;
  border-left: 1px solid #555;
  background: linear-gradient(#bcbcbc, #a4a4a4);
  white-space: nowrap;
}
.status button.on { background: linear-gradient(#e2f2f8, #8fc6dc); }
.status .model { width: 30px; }
.status-fill { flex: 1; }
.layouts { margin-right: 36px; }
.status .scale button:first-child { width: 54px; gap: 2px; }
.status .space button:first-child { width: 107px; gap: 2px; }
.scale { margin-right: 5px; }
.space { margin-right: 3px; }
.end { padding-right: 2px; }
.status .end .drop { width: 12px; }

/* site strip */
.site {
  display: flex;
  justify-content: space-between;
  align-items: center;
  height: 32px;
  padding: 0 32px 2px 4px;
  background: #3eb370;
  color: #fff;
  font-size: 20px;
  line-height: 30px;
}
.site a { color: inherit; text-decoration: none; font-family: "Liberation Sans", sans-serif; }
.site span { font-weight: 300; padding-top: 4px; }
```
